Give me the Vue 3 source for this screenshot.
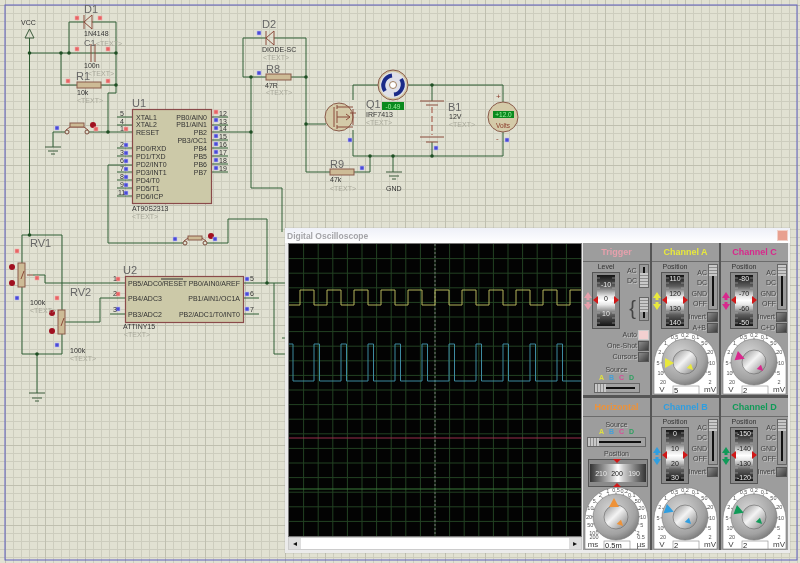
<template>
  <div class="sheet">
    <!-- schematic canvas -->
    <svg class="schematic" width="800" height="563" viewBox="0 0 800 563">
      <defs>
        <linearGradient id="drumV" x1="0" y1="0" x2="0" y2="1">
          <stop offset="0" stop-color="#141414" />
          <stop offset="0.22" stop-color="#5c5c5c" />
          <stop offset="0.42" stop-color="#e8e8e8" />
          <stop offset="0.5" stop-color="#ffffff" />
          <stop offset="0.58" stop-color="#e8e8e8" />
          <stop offset="0.78" stop-color="#5c5c5c" />
          <stop offset="1" stop-color="#141414" />
        </linearGradient>
        <linearGradient id="drumH" x1="0" y1="0" x2="1" y2="0">
          <stop offset="0" stop-color="#333" />
          <stop offset="0.4" stop-color="#ccc" />
          <stop offset="0.5" stop-color="#fff" />
          <stop offset="0.6" stop-color="#ccc" />
          <stop offset="1" stop-color="#333" />
        </linearGradient>
        <radialGradient id="knobOuter" cx="0.4" cy="0.35" r="0.75">
          <stop offset="0" stop-color="#d6d6d6" />
          <stop offset="0.7" stop-color="#a2a2a2" />
          <stop offset="1" stop-color="#6c6c6c" />
        </radialGradient>
        <linearGradient id="knobInner" x1="0" y1="0" x2="1" y2="1">
          <stop offset="0" stop-color="#8a8a8a" />
          <stop offset="0.45" stop-color="#f4f4f4" />
          <stop offset="1" stop-color="#7a7a7a" />
        </linearGradient>
      </defs>

      <rect class="frame" x="5" y="5" width="792" height="555" />
      <polyline v-for="(w, i) in wires" :key="'w' + i" class="wire" :points="w" />

      <!-- diodes, cap, resistors -->
      <g class="part">
        <path d="M84 15V29M84 22L92 15V29Z" />
        <path d="M266 31V45M266 38L274 31V45Z" />
        <path d="M91 44V62M95 44V62" />
        <rect class="body" x="77" y="82" width="24" height="6" />
        <rect class="body" x="266" y="74" width="25" height="6" />
        <rect class="body" x="330" y="169" width="24" height="6" />
      </g>

      <!-- push buttons -->
      <g class="part">
        <circle class="hole" cx="67" cy="132" r="2" />
        <circle class="hole" cx="87" cy="132" r="2" />
        <path d="M66 130L70 127H84L88 130" />
        <rect class="body" x="70" y="123" width="14" height="4" />
        <circle class="hole" cx="185" cy="243" r="2" />
        <circle class="hole" cx="205" cy="243" r="2" />
        <path d="M184 241L188 238H202L206 241" />
        <rect class="body" x="188" y="236" width="14" height="4" />
      </g>

      <!-- chips -->
      <rect class="chip" x="132.5" y="109.5" width="79" height="94" />
      <rect class="chip" x="125.5" y="276.5" width="118" height="46" />
      <path class="overline" d="M161 279H183" />

      <!-- pots -->
      <g class="part">
        <rect class="body" x="18" y="263" width="7" height="24" />
        <rect class="body" x="58" y="310" width="7" height="24" />
        <path d="M27 275H33M21 279L24 271M61 326L64 318" />
      </g>

      <!-- grounds + vcc -->
      <path class="ground" d="M45 147H61M48 151H58M51 154H55M29 393H45M32 398H42M35 401H39M386 172H402M389 176H399M392 179H396" />
      <path class="vcc" d="M29.5 29L25 38H34Z" />

      <!-- mosfet -->
      <g class="part">
        <circle class="dev" cx="339" cy="117" r="14" />
        <path d="M334 107V127M337 105V109M337 111V123M337 125V129M337 107H353M337 127H353M337 117H350L346 114M346 120L350 117M350 113H356M353 109V125" />
      </g>

      <!-- motor -->
      <circle class="dev" cx="393" cy="85" r="15" />
      <circle cx="393" cy="85" r="13" fill="#dfe0e8" />
      <path class="coil" d="M385 91A10 10 0 0 1 392 75.5M401 79A10 10 0 0 1 394 94.5" />
      <circle cx="393" cy="85" r="3.5" fill="#fff" stroke="#a08060" />
      <rect class="display" x="382" y="102" width="22" height="8" />

      <!-- battery -->
      <path class="part-line" d="M420 101H444M426 105H438M420 137H444M426 142H438" />
      <path class="dash" d="M432 107V135" />

      <!-- voltmeter -->
      <circle class="dev" cx="503" cy="117" r="15" />
      <rect class="display" x="493" y="111" width="21" height="7" />

      <circle v-for="(j, i) in junctions" :key="'j' + i" class="junction" :cx="j[0]" :cy="j[1]" r="1.8" />
      <circle v-for="(d, i) in redDots" :key="'d' + i" class="red-dot" :cx="d[0]" :cy="d[1]" r="3" />
      <rect v-for="(m, i) in blueMarks" :key="'b' + i" class="mark-blue" :x="m[0] - 2" :y="m[1] - 2" width="4" height="4" />
      <rect v-for="(m, i) in redMarks" :key="'r' + i" class="mark-red" :x="m[0] - 2" :y="m[1] - 2" width="4" height="4" />

      <text
        v-for="(t, i) in labels"
        :key="'t' + i"
        :x="t[0]"
        :y="t[1]"
        :font-size="t[3]"
        :class="t[4]"
        :text-anchor="t[5] || 'start'"
      >{{ t[2] }}</text>
    </svg>

    <!-- oscilloscope window -->
    <div class="scope">
      <div class="title-bar">
        <span>Digital Oscilloscope</span>
        <i class="close"></i>
      </div>

      <div class="scope-body">
        <div class="screen-col">
          <svg class="screen" width="292" height="292" viewBox="0 0 292 292">
            <rect width="292" height="292" fill="#030303" />
            <path class="grid-line" :d="gridPath" />
            <path class="center-line" d="M146 0V292" />
            <path class="trace" stroke="#b5b55c" :d="traceA" />
            <path class="trace" stroke="#3d8aa0" :d="traceB" />
            <path class="trace" stroke="#9a2f4c" d="M0 194H292" />
            <path class="trace" stroke="#3b7a3b" d="M0 245H292" />
          </svg>
          <div class="scrollbar">
            <span class="sb-btn">◂</span>
            <span class="sb-track"></span>
            <span class="sb-btn">▸</span>
          </div>
        </div>

        <div class="panel">
          <section v-for="c in cells" :key="c.name" class="cell">
            <header class="cell-head" :style="{ color: c.color }">{{ c.name }}</header>

            <div class="cell-body">
              <!-- drum + side controls -->
              <div v-if="c.marks" class="top-row">
                <div class="drum-col">
                  <div class="small-label">{{ c.drumLabel }}</div>
                  <div class="drum-wrap">
                    <svg class="arrows" width="8" height="18" viewBox="0 0 8 18">
                      <path :fill="c.color" d="M4 0L8 6H5.5V8H2.5V6H0ZM4 18L8 12H5.5V10H2.5V12H0Z" />
                    </svg>
                    <svg class="drum" width="28" height="57" viewBox="0 0 28 57">
                      <rect class="drum-frame" x="0.5" y="0.5" width="27" height="56" />
                      <rect x="5" y="3" width="18" height="51" fill="url(#drumV)" />
                      <path class="drum-ticks" :d="drumTicks" />
                      <path class="red-tri" d="M1 28L6 24V32ZM27 28L22 24V32Z" />
                      <text
                        v-for="m in c.marks"
                        :key="m[0]"
                        class="drum-num"
                        :class="{ dark: Math.abs(m[1] - 28) < 10 }"
                        x="14"
                        :y="m[1] + 3"
                        text-anchor="middle"
                      >{{ m[0] }}</text>
                    </svg>
                  </div>
                </div>

                <div v-if="c.coupling" class="side-col">
                  <div class="couple-row">
                    <div class="couple-labels">
                      <span v-for="l in coupling" :key="l">{{ l }}</span>
                    </div>
                    <div class="v-slider"><i></i></div>
                  </div>
                  <div class="btn-row"><span>Invert</span><i class="push"></i></div>
                  <div v-if="c.sum" class="btn-row"><span>{{ c.sum }}</span><i class="push"></i></div>
                </div>

                <div v-else class="trig-side">
                  <div class="trig-row">
                    <div class="trig-labels"><span>AC</span><span>DC</span></div>
                    <div class="v-slider short"><i></i></div>
                  </div>
                  <div class="trig-row second">
                    <span class="brace">{</span>
                    <div class="v-slider short low"><i></i></div>
                  </div>
                </div>
              </div>

              <!-- trigger extras -->
              <template v-if="c.source === 'trigger'">
                <div class="btn-row wide"><span>Auto</span><i class="push pink"></i></div>
                <div class="btn-row wide"><span>One-Shot</span><i class="push"></i></div>
                <div class="btn-row wide"><span>Cursors</span><i class="push"></i></div>
                <div class="source-label">Source</div>
                <div class="source-letters"><b v-for="s in sources" :key="s[0]" :style="{ color: s[1] }">{{ s[0] }}</b></div>
                <div class="h-slider trig-slider"><i></i></div>
              </template>

              <!-- horizontal extras -->
              <template v-if="c.source === 'horizontal'">
                <div class="source-label">Source</div>
                <div class="source-letters wide-letters"><b v-for="s in sources" :key="s[0]" :style="{ color: s[1] }">{{ s[0] }}</b></div>
                <div class="h-slider"><i></i></div>
                <div class="source-label pos">Position</div>
                <svg class="h-drum" width="60" height="28" viewBox="0 0 60 28">
                  <rect class="drum-frame" x="0.5" y="0.5" width="59" height="27" />
                  <rect x="2" y="5" width="56" height="18" fill="url(#drumH)" />
                  <path class="red-tri" d="M29 4L25 0H33ZM29 24L25 28H33Z" />
                  <text class="drum-num" x="13" y="17" text-anchor="middle">210</text>
                  <text class="drum-num dark" x="29" y="17" text-anchor="middle">200</text>
                  <text class="drum-num" x="46" y="17" text-anchor="middle">190</text>
                </svg>
              </template>

              <div v-if="c.source !== 'trigger'" class="dial-wrap">
                <svg class="dial" width="67" height="63" viewBox="0 0 67 63">
                  <path class="dial-back" d="M1 62V32A31.5 31.5 0 0 1 64 32V62Z" />
                  <g v-for="t in dialMarks(c.scale)" :key="t.key">
                    <path class="dial-tick" :d="t.tick" />
                    <text class="dial-num" :x="t.x" :y="t.y" text-anchor="middle">{{ t.text }}</text>
                  </g>
                  <circle cx="32" cy="30" r="23" fill="url(#knobOuter)" stroke="#777" stroke-width="0.6" />
                  <circle cx="32" cy="30" r="12" fill="url(#knobInner)" stroke="#666" stroke-width="0.6" />
                  <path :fill="c.color" :transform="`translate(${c.big[0] + 32} ${c.big[1] + 30}) rotate(${c.big[2]})`" d="M0 -5L5 4H-5Z" />
                  <path :fill="c.color" :transform="`translate(${c.small[0] + 32} ${c.small[1] + 30}) rotate(${c.small[2]})`" d="M0 -3L3 3H-3Z" />
                  <text class="dial-unit" x="9" y="60" text-anchor="middle">{{ c.units[0] }}</text>
                  <text class="dial-unit" x="57" y="60" text-anchor="middle">{{ c.units[1] }}</text>
                  <text class="dial-num" x="10" y="52" text-anchor="middle">{{ c.ends[0] }}</text>
                  <text class="dial-num" x="57" y="52" text-anchor="middle">{{ c.ends[1] }}</text>
                  <rect class="dial-input" x="20" y="54" width="26" height="8" />
                  <text class="dial-value" x="21" y="61">{{ c.value }}</text>
                </svg>
              </div>
            </div>
          </section>
        </div>
      </div>
    </div>
  </div>
</template>

<script setup>
const wires = [
  '29.5,38 29.5,235',
  '29.5,53 116,53',
  '69,53 69,22 84,22',
  '92,22 116,22 116,93 108,93 108,132',
  '61,53 61,85 77,85',
  '101,85 116,85',
  '53,147 53,132 65,132',
  '89,132 132,132',
  '117,117 132,117',
  '117,125 132,125',
  '108,165 108,243 183,243',
  '207,243 228,243 228,219 267,219 267,283',
  '117,148 132,148',
  '117,156 132,156',
  '108,165 132,165',
  '117,172 132,172',
  '117,180 132,180',
  '117,188 132,188',
  '117,196 132,196',
  '212,117 228,117',
  '212,125 228,125',
  '212,132 251,132',
  '212,140 228,140',
  '212,148 228,148',
  '212,156 228,156',
  '212,164 228,164',
  '212,172 228,172',
  '251,77 251,188 282,188 282,232',
  '274,283 274,354 290,354',
  '282,338 290,338',
  '243,283 285,283',
  '243,77 243,38 266,38',
  '274,38 306,38 306,172 330,172',
  '243,77 266,77',
  '291,77 306,77',
  '306,124 326,124',
  '354,172 370,172 370,156',
  '353,100 353,85 378,85',
  '408,85 503,85 503,102',
  '353,130 353,156 503,156 503,132',
  '432,85 432,101',
  '432,142 432,156',
  '393,156 393,172',
  '22,235 62,235 62,310',
  '22,235 22,263',
  '22,287 22,354 62,354 62,334',
  '37,354 37,393',
  '33,275 45,275 45,283 125,283',
  '65,322 100,322 100,298 125,298',
  '110,314 125,314',
  '243,298 259,298',
  '243,314 259,314'
]

const junctions = [
  [29.5, 53], [61, 53], [69, 53], [116, 53], [116, 85], [108, 132], [251, 132],
  [251, 77], [306, 77], [306, 124], [432, 85], [370, 156], [393, 156], [432, 156],
  [29.5, 235], [37, 354], [267, 283]
]

const redDots = [[93, 125], [12, 267], [12, 283], [52, 313], [52, 331], [211, 236]]

const blueMarks = [
  [57, 128], [259, 33], [259, 73], [350, 140], [362, 168], [436, 148], [507, 140],
  [126, 145], [126, 153], [126, 161], [126, 169], [126, 177], [126, 185], [126, 193],
  [216, 120], [216, 128], [216, 136], [216, 144], [216, 152], [216, 160], [216, 168],
  [175, 239], [215, 239], [17, 298], [57, 345], [118, 309], [247, 279], [247, 294], [247, 309]
]

const redMarks = [
  [77, 18], [100, 18], [77, 49], [108, 49], [68, 81], [108, 81], [96, 129],
  [17, 251], [37, 278], [57, 298], [216, 112], [126, 129], [118, 279], [118, 294]
]

const TEXT = '<TEXT>'
const labels = [
  [21, 25, 'VCC', 7, 'lbl'],
  [84, 13, 'D1', 11, 'ref'],
  [84, 36, '1N4148', 7, 'lbl'],
  [84, 46, 'C1', 9, 'ref'],
  [96, 46, TEXT, 7, 'muted'],
  [84, 68, '100n', 7, 'lbl'],
  [88, 76, TEXT, 7, 'muted'],
  [76, 80, 'R1', 11, 'ref'],
  [77, 95, '10k', 7, 'lbl'],
  [77, 103, TEXT, 7, 'muted'],
  [132, 107, 'U1', 11, 'ref'],
  [132, 211, 'AT90S2313', 7, 'lbl'],
  [132, 219, TEXT, 7, 'muted'],
  [136, 120, 'XTAL1', 7, 'lbl'],
  [136, 127, 'XTAL2', 7, 'lbl'],
  [136, 135, 'RESET', 7, 'lbl'],
  [136, 151, 'PD0/RXD', 7, 'lbl'],
  [136, 159, 'PD1/TXD', 7, 'lbl'],
  [136, 167, 'PD2/INT0', 7, 'lbl'],
  [136, 175, 'PD3/INT1', 7, 'lbl'],
  [136, 183, 'PD4/T0', 7, 'lbl'],
  [136, 191, 'PD5/T1', 7, 'lbl'],
  [136, 199, 'PD6/ICP', 7, 'lbl'],
  [207, 120, 'PB0/AIN0', 7, 'lbl', 'end'],
  [207, 127, 'PB1/AIN1', 7, 'lbl', 'end'],
  [207, 135, 'PB2', 7, 'lbl', 'end'],
  [207, 143, 'PB3/OC1', 7, 'lbl', 'end'],
  [207, 151, 'PB4', 7, 'lbl', 'end'],
  [207, 159, 'PB5', 7, 'lbl', 'end'],
  [207, 167, 'PB6', 7, 'lbl', 'end'],
  [207, 175, 'PB7', 7, 'lbl', 'end'],
  [120, 116, '5', 7, 'lbl'],
  [120, 124, '4', 7, 'lbl'],
  [120, 131, '1', 7, 'lbl'],
  [120, 147, '2', 7, 'lbl'],
  [120, 155, '3', 7, 'lbl'],
  [120, 163, '6', 7, 'lbl'],
  [120, 171, '7', 7, 'lbl'],
  [120, 179, '8', 7, 'lbl'],
  [120, 187, '9', 7, 'lbl'],
  [118, 195, '11', 7, 'lbl'],
  [219, 116, '12', 7, 'lbl'],
  [219, 124, '13', 7, 'lbl'],
  [219, 131, '14', 7, 'lbl'],
  [219, 139, '15', 7, 'lbl'],
  [219, 147, '16', 7, 'lbl'],
  [219, 155, '17', 7, 'lbl'],
  [219, 163, '18', 7, 'lbl'],
  [219, 171, '19', 7, 'lbl'],
  [262, 28, 'D2', 11, 'ref'],
  [262, 52, 'DIODE-SC', 7, 'lbl'],
  [263, 60, TEXT, 7, 'muted'],
  [266, 73, 'R8', 11, 'ref'],
  [265, 88, '47R', 7, 'lbl'],
  [266, 95, TEXT, 7, 'muted'],
  [366, 108, 'Q1', 11, 'ref'],
  [366, 117, 'IRF7413', 7, 'lbl'],
  [366, 125, TEXT, 7, 'muted'],
  [448, 111, 'B1', 11, 'ref'],
  [449, 119, '12V', 7, 'lbl'],
  [449, 127, TEXT, 7, 'muted'],
  [330, 168, 'R9', 11, 'ref'],
  [330, 182, '47k', 7, 'lbl'],
  [330, 191, TEXT, 7, 'muted'],
  [386, 191, 'GND', 7, 'lbl'],
  [393, 109, '-0.49', 6.5, 'led', 'middle'],
  [503.5, 117, '+12.0', 6.5, 'led', 'middle'],
  [503, 128, 'Volts', 6.5, 'volts', 'middle'],
  [496, 99, '+', 8, 'volts'],
  [496, 141, '-', 8, 'volts'],
  [30, 247, 'RV1', 11, 'ref'],
  [30, 305, '100k', 7, 'lbl'],
  [30, 313, TEXT, 7, 'muted'],
  [70, 296, 'RV2', 11, 'ref'],
  [70, 353, '100k', 7, 'lbl'],
  [70, 361, TEXT, 7, 'muted'],
  [123, 274, 'U2', 11, 'ref'],
  [128, 286, 'PB5/ADC0/RESET', 7, 'lbl'],
  [128, 301, 'PB4/ADC3', 7, 'lbl'],
  [128, 317, 'PB3/ADC2', 7, 'lbl'],
  [240, 286, 'PB0/AIN0/AREF', 7, 'lbl', 'end'],
  [240, 301, 'PB1/AIN1/OC1A', 7, 'lbl', 'end'],
  [240, 317, 'PB2/ADC1/T0/INT0', 7, 'lbl', 'end'],
  [123, 329, 'ATTINY15', 7, 'lbl'],
  [124, 337, TEXT, 7, 'muted'],
  [113, 281, '1', 7, 'lbl'],
  [113, 296, '2', 7, 'lbl'],
  [113, 312, '3', 7, 'lbl'],
  [250, 281, '5', 7, 'lbl'],
  [250, 296, '6', 7, 'lbl'],
  [250, 312, '7', 7, 'lbl']
]

// scope screen
let grid = ''
for (let i = 1; i < 20; i++) {
  const p = i * 14.6
  grid += `M${p} 0V292M0 ${p}H292`
}
const gridPath = grid

function square(low, high, firstRise, period, width) {
  let d = `M0 ${low}`
  for (let x = firstRise; x < 292; x += period) {
    const end = Math.min(x + width, 292)
    d += `H${x}V${high}H${end}`
    if (end < 292) d += `V${low}`
  }
  return d + 'H292'
}
const traceA = square(61, 46, 11, 27, 14)
const traceB = `M0 100H4V137` + square(137, 100, 25, 27, 5.5).replace('M0 137', '')

const coupling = ['AC', 'DC', 'GND', 'OFF']
const sources = [['A', '#e0e040'], ['B', '#45a0d8'], ['C', '#d84f9a'], ['D', '#2fa060']]
const drumTicks = (() => {
  let d = ''
  for (let y = 6; y < 54; y += 5) d += `M5 ${y}H8M20 ${y}H23`
  return d
})()

const volts = ['10', '5', '2', '1', '0.5', '0.2', '0.1', '50', '20', '10', '5']
const times = ['100', '50', '20', '10', '5', '2', '1', '0.5', '0.2', '0.1', '50', '20', '10', '5', '2']

const cells = [
  {
    name: 'Trigger',
    color: '#e6a0ac',
    source: 'trigger',
    drumLabel: 'Level',
    marks: [['-10', 12], ['0', 26], ['10', 41]]
  },
  {
    name: 'Channel A',
    color: '#e8e83c',
    coupling: true,
    sum: 'A+B',
    drumLabel: 'Position',
    marks: [['110', 6], ['120', 21], ['130', 36], ['140', 50]],
    scale: volts,
    units: ['V', 'mV'],
    ends: ['20', '2'],
    value: '5',
    big: [-16, 1, 90],
    small: [6, 6, 135]
  },
  {
    name: 'Channel C',
    color: '#d8288c',
    coupling: true,
    sum: 'C+D',
    drumLabel: 'Position',
    marks: [['-80', 6], ['-70', 21], ['-60', 36], ['-50', 50]],
    scale: volts,
    units: ['V', 'mV'],
    ends: ['20', '2'],
    value: '2',
    big: [-14, -5, 110],
    small: [7, 7, 135]
  },
  {
    name: 'Horizontal',
    color: '#ee9238',
    source: 'horizontal',
    scale: times,
    units: ['ms', 'µs'],
    ends: ['200', '0.5'],
    value: '0.5m',
    big: [-2, -14, 0],
    small: [5, 7, 135]
  },
  {
    name: 'Channel B',
    color: '#2f9ee0',
    coupling: true,
    drumLabel: 'Position',
    marks: [['0', 6], ['10', 21], ['20', 36], ['30', 50]],
    scale: volts,
    units: ['V', 'mV'],
    ends: ['20', '2'],
    value: '2',
    big: [-16, -7, 110],
    small: [4, 5, 135]
  },
  {
    name: 'Channel D',
    color: '#109a58',
    coupling: true,
    drumLabel: 'Position',
    marks: [['-150', 6], ['-140', 21], ['-130', 36], ['-120', 50]],
    scale: volts,
    units: ['V', 'mV'],
    ends: ['20', '2'],
    value: '2',
    big: [-15, -6, 110],
    small: [6, 5, 135]
  }
]

function dialMarks(scale) {
  const wide = scale.length > 11
  const from = wide ? 215 : 205
  const to = wide ? -35 : -25
  const step = (from - to) / (scale.length - 1)
  return scale.map((text, i) => {
    const a = ((from - step * i) * Math.PI) / 180
    const cos = Math.cos(a)
    const sin = Math.sin(a)
    return {
      key: i,
      text,
      x: +(32 + cos * 27).toFixed(1),
      y: +(32 - sin * 27).toFixed(1),
      tick: `M${(32 + cos * 22).toFixed(1)} ${(30 - sin * 22).toFixed(1)}L${(32 + cos * 24.5).toFixed(1)} ${(30 - sin * 24.5).toFixed(1)}`
    }
  })
}
</script>

<style>
html,
body {
  margin: 0;
  overflow: hidden;
}
</style>

<style scoped>
.sheet {
  position: relative;
  width: 800px;
  height: 563px;
  overflow: hidden;
  font-family: "Liberation Sans", Arial, sans-serif;
  background-color: #e1e1d2;
  background-image:
    linear-gradient(#bfbfaf 1px, transparent 1px),
    linear-gradient(90deg, #bfbfaf 1px, transparent 1px),
    linear-gradient(#cdcdbe 1px, transparent 1px),
    linear-gradient(90deg, #cdcdbe 1px, transparent 1px);
  background-size: 40px 40px, 40px 40px, 8px 8px, 8px 8px;
  background-position: 5px 5px;
  filter: blur(0.5px);
}

.schematic {
  position: absolute;
  left: 0;
  top: 0;
}

.frame {
  fill: none;
  stroke: #5f5fc0;
  stroke-width: 1;
}

.wire {
  fill: none;
  stroke: #2f5f34;
  stroke-width: 1;
}

.part path,
.part-line {
  fill: none;
  stroke: #8a4a3a;
  stroke-width: 1;
}

.body {
  fill: #cdbb96;
  stroke: #8a5a4a;
  stroke-width: 1;
}

.hole {
  fill: #e1e1d2;
  stroke: #7a4a3a;
}

.chip {
  fill: #ccc9a8;
  stroke: #8a4a4a;
  stroke-width: 1.2;
}

.overline {
  stroke: #333;
  fill: none;
}

.ground {
  fill: none;
  stroke: #3a5a3a;
}

.vcc {
  fill: none;
  stroke: #3a5a3a;
}

.dev {
  fill: #d4caa8;
  stroke: #8a5a4a;
}

.coil {
  fill: none;
  stroke: #1a2a88;
  stroke-width: 4;
}

.display {
  fill: #0a8a1e;
}

.dash {
  stroke: #a04a3a;
  stroke-dasharray: 6 3;
  fill: none;
}

.junction {
  fill: #1f4f24;
}

.red-dot {
  fill: #a01020;
}

.mark-blue {
  fill: #4a4ad8;
  stroke: #c0c0f0;
  stroke-width: 0.6;
}

.mark-red {
  fill: #e86464;
  stroke: #f0b0b0;
  stroke-width: 0.6;
}

.ref {
  fill: #666;
}

.lbl {
  fill: #333;
}

.muted {
  fill: #a8a89a;
}

.led {
  fill: #a0f0a0;
}

.volts {
  fill: #8a3a2a;
}

/* oscilloscope */
.scope {
  position: absolute;
  left: 285px;
  top: 228px;
  width: 505px;
  height: 325px;
  background: #ebebeb;
  box-shadow: 0 0 1px #999;
  display: flex;
  flex-direction: column;
}

.title-bar {
  height: 15px;
  flex: none;
  background: linear-gradient(#eef0f8, #ffffff);
  display: flex;
  align-items: center;
  justify-content: space-between;
  padding: 0 2px;
  color: #a4a4a8;
  font-size: 8.5px;
  font-weight: bold;
}

.close {
  width: 9px;
  height: 9px;
  background: #e8a090;
  border: 1px solid #f0d0c8;
}

.scope-body {
  display: flex;
  flex: 1;
  min-height: 0;
}

.screen-col {
  width: 298px;
  padding: 1px 2px 0 4px;
  box-sizing: border-box;
  flex: none;
}

.screen {
  display: block;
  outline: 1px solid #777;
}

.grid-line {
  fill: none;
  stroke: #234223;
  stroke-width: 1;
}

.center-line {
  stroke: #777;
  stroke-dasharray: 2 2;
  fill: none;
}

.trace {
  fill: none;
  stroke-width: 1;
}

.scrollbar {
  margin-top: 2px;
  height: 11px;
  display: flex;
  background: #fff;
  outline: 1px solid #ccc;
}

.sb-btn {
  width: 12px;
  background: #dedede;
  font-size: 8px;
  line-height: 11px;
  text-align: center;
  color: #111;
}

.sb-track {
  flex: 1;
}

.panel {
  width: 205px;
  height: 307px;
  display: grid;
  grid-template-columns: repeat(3, 1fr);
  grid-template-rows: 152px 152px;
  gap: 3px 2px;
  background: #555;
}

.cell {
  background: #9d9d9d;
  min-width: 0;
}

.cell-head {
  height: 18px;
  border-bottom: 1px solid #6c6c6c;
  text-align: center;
  font-size: 9px;
  font-weight: bold;
  line-height: 18px;
  white-space: nowrap;
}

.cell-body {
  height: 133px;
  display: flex;
  flex-direction: column;
}

.top-row {
  display: flex;
  height: 67px;
  flex: none;
}

.drum-col {
  width: 38px;
  flex: none;
  padding-left: 1px;
  box-sizing: border-box;
}

.small-label {
  height: 10px;
  margin-left: 8px;
  width: 28px;
  text-align: center;
  font-size: 7px;
  line-height: 10px;
  color: #333;
  white-space: nowrap;
}

.drum-wrap {
  display: flex;
  align-items: center;
}

.arrows {
  flex: none;
}

.drum {
  display: block;
  flex: none;
}

.drum-frame {
  fill: #8a8a8a;
  stroke: #555;
}

.drum-ticks {
  stroke: #ccc;
  stroke-width: 0.5;
  fill: none;
}

.red-tri {
  fill: #d01818;
}

.drum-num {
  font-size: 7px;
  fill: #e8e8e8;
}

.drum-num.dark {
  fill: #222;
}

.side-col {
  flex: 1;
  min-width: 0;
  padding-top: 2px;
  box-sizing: border-box;
}

.couple-row {
  display: flex;
  height: 47px;
}

.couple-labels {
  flex: 1;
  display: flex;
  flex-direction: column;
  align-items: flex-end;
  padding: 4px 1px 0 0;
  font-size: 7px;
  line-height: 10.3px;
  color: #444;
  text-shadow: 1px 1px 0 #c6c6c6;
}

.v-slider {
  width: 10px;
  height: 46px;
  margin-right: 1px;
  flex: none;
  position: relative;
  background: #9a9a9a;
  border: 1px solid #666;
  box-sizing: border-box;
}

.v-slider::before {
  content: "";
  position: absolute;
  left: 3px;
  top: 8px;
  bottom: 3px;
  width: 2px;
  background: #111;
}

.v-slider i {
  position: absolute;
  left: 0;
  right: 0;
  top: 0;
  height: 11px;
  background: repeating-linear-gradient(#c8c8c8 0 2px, #8e8e8e 2px 3px);
}

.v-slider.short {
  height: 24px;
}

.v-slider.short::before {
  top: 2px;
  bottom: 2px;
}

.v-slider.short i {
  height: 14px;
  top: 8px;
}

.v-slider.short.low i {
  top: 0;
}

.btn-row {
  display: flex;
  align-items: center;
  justify-content: flex-end;
  height: 11px;
  font-size: 7px;
  color: #444;
  text-shadow: 1px 1px 0 #c6c6c6;
  padding-right: 1px;
}

.push {
  width: 11px;
  height: 10px;
  margin-left: 1px;
  box-sizing: border-box;
  border: 1px solid #555;
  background: linear-gradient(135deg, #8c8c8c, #3e3e3e);
  flex: none;
}

.push.pink {
  background: #f2d0d0;
  border-color: #ccc;
}

.trig-side {
  flex: 1;
  padding-top: 2px;
  box-sizing: border-box;
}

.trig-row {
  display: flex;
  justify-content: flex-end;
  height: 24px;
}

.trig-row.second {
  margin-top: 9px;
}

.trig-labels {
  display: flex;
  flex-direction: column;
  font-size: 7px;
  line-height: 10px;
  color: #444;
  text-shadow: 1px 1px 0 #c6c6c6;
  padding: 2px 2px 0 0;
}

.brace {
  font-size: 20px;
  line-height: 22px;
  color: #444;
  padding-right: 3px;
}

.source-label {
  text-align: center;
  font-size: 7px;
  line-height: 9px;
  color: #444;
  margin-top: 3px;
  text-shadow: 1px 1px 0 #c6c6c6;
}

.source-label.pos {
  margin-top: 2px;
}

.source-letters {
  display: flex;
  justify-content: center;
  gap: 5px;
  font-size: 7px;
  line-height: 8px;
}

.source-letters b {
  font-weight: bold;
}

.wide-letters {
  margin-top: -1px;
}

.h-slider {
  height: 10px;
  margin: 1px 4px 0;
  position: relative;
  border: 1px solid #666;
  box-sizing: border-box;
  background: #a2a2a2;
}

.h-slider::before {
  content: "";
  position: absolute;
  left: 8px;
  right: 4px;
  top: 3px;
  height: 2px;
  background: #111;
}

.h-slider i {
  position: absolute;
  left: 0;
  top: 0;
  bottom: 0;
  width: 11px;
  background: repeating-linear-gradient(90deg, #c8c8c8 0 2px, #8e8e8e 2px 3px);
}

.trig-slider {
  margin: 1px 10px 0 11px;
}

.h-drum {
  display: block;
  margin: 1px 0 0 5px;
}

.dial-wrap {
  margin-top: auto;
  padding-left: 1px;
}

.dial {
  display: block;
}

.dial-back {
  fill: #fff;
  stroke: #777;
  stroke-width: 0.6;
}

.dial-tick {
  stroke: #333;
  stroke-width: 0.6;
}

.dial-num {
  font-size: 5.5px;
  fill: #555;
}

.dial-unit {
  font-size: 8px;
  fill: #444;
}

.dial-input {
  fill: #fff;
  stroke: #888;
  stroke-width: 0.6;
}

.dial-value {
  font-size: 7.5px;
  fill: #222;
}
</style>
